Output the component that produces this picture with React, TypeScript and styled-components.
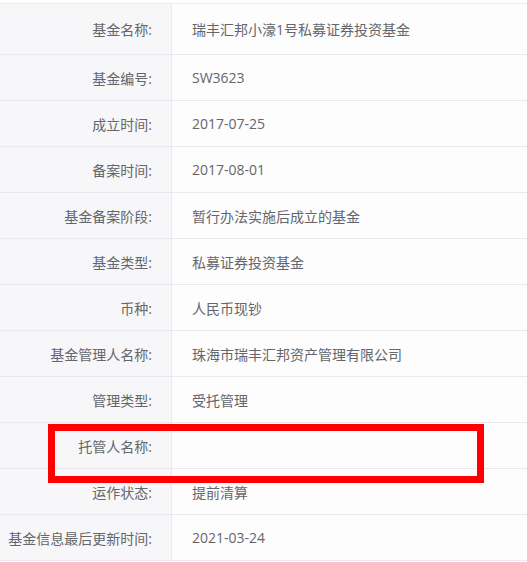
import React from "react";
import styled, { createGlobalStyle } from "styled-components";

const Global = createGlobalStyle`
  html, body { margin: 0; padding: 0; background: #ffffff; }
  body { font-family: "Open Sans", "Noto Sans CJK SC", "Noto Sans", sans-serif; }
`;

const Page = styled.div`
  position: relative;
  width: 527px;
  height: 562px;
  overflow: hidden;
  background: #ffffff;
  padding-top: 3px;
  box-sizing: border-box;
`;

const Table = styled.div`
  border-top: 1px solid #ebebef;
`;

const Row = styled.div<{ $first?: boolean }>`
  display: grid;
  grid-template-columns: 172px 1fr;
  height: ${(p) => (p.$first ? 51 : 46)}px;
  border-bottom: 1px solid #e9e9ed;
  box-sizing: border-box;
`;

const Label = styled.div`
  display: flex;
  align-items: center;
  justify-content: flex-end;
  padding-right: 19px;
  background: #f7f7f9;
  border-right: 1px solid #ebebef;
  color: #64666b;
  font-size: 14px;
  white-space: nowrap;
`;

const Value = styled.div`
  display: flex;
  align-items: center;
  padding-left: 20px;
  background: #fdfdfe;
  color: #64666b;
  font-size: 14px;
  white-space: nowrap;
`;

const Highlight = styled.div`
  position: absolute;
  left: 48px;
  top: 424px;
  width: 436px;
  height: 59px;
  border: 7px solid #ff0000;
  box-sizing: border-box;
  pointer-events: none;
`;

const rows: [string, string][] = [
  ["基金名称:", "瑞丰汇邦小濠1号私募证券投资基金"],
  ["基金编号:", "SW3623"],
  ["成立时间:", "2017-07-25"],
  ["备案时间:", "2017-08-01"],
  ["基金备案阶段:", "暂行办法实施后成立的基金"],
  ["基金类型:", "私募证券投资基金"],
  ["币种:", "人民币现钞"],
  ["基金管理人名称:", "珠海市瑞丰汇邦资产管理有限公司"],
  ["管理类型:", "受托管理"],
  ["托管人名称:", ""],
  ["运作状态:", "提前清算"],
  ["基金信息最后更新时间:", "2021-03-24"],
];

export default function App() {
  return (
    <Page>
      <Global />
      <Table>
        {rows.map(([k, v], i) => (
          <Row key={k} $first={i === 0}>
            <Label>{k}</Label>
            <Value>{v}</Value>
          </Row>
        ))}
      </Table>
      <Highlight />
    </Page>
  );
}
